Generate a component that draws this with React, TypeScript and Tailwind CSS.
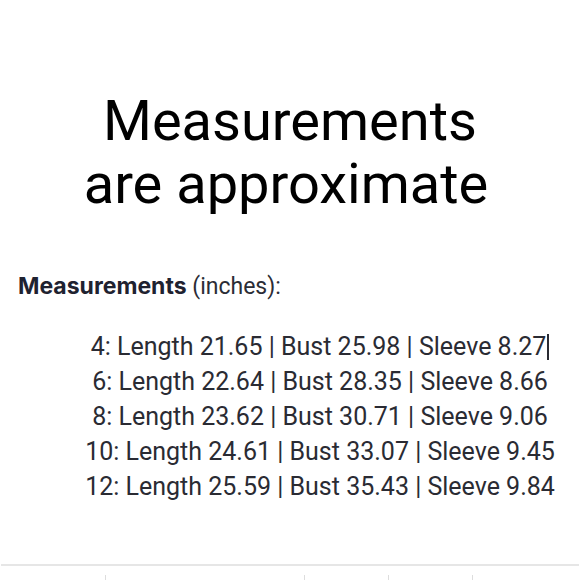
import React from "react";

const rows = [
  "4: Length 21.65 | Bust 25.98 | Sleeve 8.27",
  "6: Length 22.64 | Bust 28.35 | Sleeve 8.66",
  "8: Length 23.62 | Bust 30.71 | Sleeve 9.06",
  "10: Length 24.61 | Bust 33.07 | Sleeve 9.45",
  "12: Length 25.59 | Bust 35.43 | Sleeve 9.84",
];

export default function App() {
  return (
    <div className="w-[580px] h-[580px] bg-white overflow-hidden flex flex-col" style={{ fontFamily: "Roboto, sans-serif" }}>
      <div className="pt-[90px] flex flex-col items-center text-black text-[56px] leading-[63px] text-center">
        <div>Measurements</div>
        <div className="pr-[8px]">are approximate</div>
      </div>
      <div className="mt-[55px] pl-[18px] text-[23px] leading-[30px] text-[#2b2d36]">
        <span className="font-bold text-[#1f2230]" style={{ fontFamily: "Inter, sans-serif" }}>Measurements</span>
        <span> (inches):</span>
      </div>
      <div className="mt-[27px] pl-[60px] flex flex-col items-center text-[25px] leading-[35px] text-[#2a2b33]">
        {rows.map((r, i) => (
          <div key={i} className="flex items-center">
            <span>{r}</span>
            {i === 0 && <span className="w-[2px] h-[26px] bg-[#2a2b33] ml-[1px]" />}
          </div>
        ))}
      </div>
      <div className="mt-auto border-t-2 border-[#e6e6e6] mx-[1px] h-[16px] grid grid-cols-[105px_199px_84px_84px_1fr]">
        <div className="border-r border-[#dddddd] mt-[9px]" />
        <div className="border-r border-[#dddddd] mt-[9px]" />
        <div className="border-r border-[#dddddd] mt-[9px]" />
        <div className="border-r border-[#dddddd] mt-[9px]" />
        <div />
      </div>
    </div>
  );
}
